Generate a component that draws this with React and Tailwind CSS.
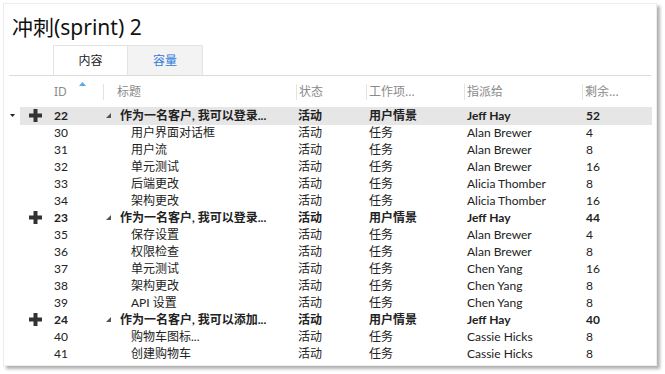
const font = { fontFamily: '"Segoe UI", "Noto Sans", "Noto Sans CJK SC", sans-serif' }
const rowFont = { fontFamily: '"Segoe UI", Lato, "Noto Sans CJK SC", sans-serif' }

const rows = [
  { id: 22, title: "作为一名客户, 我可以登录...", state: "活动", type: "用户情景", who: "Jeff Hay", left: 52, parent: true, selected: true },
  { id: 30, title: "用户界面对话框", state: "活动", type: "任务", who: "Alan Brewer", left: 4 },
  { id: 31, title: "用户流", state: "活动", type: "任务", who: "Alan Brewer", left: 8 },
  { id: 32, title: "单元测试", state: "活动", type: "任务", who: "Alan Brewer", left: 16 },
  { id: 33, title: "后端更改", state: "活动", type: "任务", who: "Alicia Thomber", left: 8 },
  { id: 34, title: "架构更改", state: "活动", type: "任务", who: "Alicia Thomber", left: 16 },
  { id: 23, title: "作为一名客户, 我可以登录...", state: "活动", type: "用户情景", who: "Jeff Hay", left: 44, parent: true },
  { id: 35, title: "保存设置", state: "活动", type: "任务", who: "Alan Brewer", left: 4 },
  { id: 36, title: "权限检查", state: "活动", type: "任务", who: "Alan Brewer", left: 8 },
  { id: 37, title: "单元测试", state: "活动", type: "任务", who: "Chen Yang", left: 16 },
  { id: 38, title: "架构更改", state: "活动", type: "任务", who: "Chen Yang", left: 8 },
  { id: 39, title: "API 设置", state: "活动", type: "任务", who: "Chen Yang", left: 8 },
  { id: 24, title: "作为一名客户, 我可以添加...", state: "活动", type: "用户情景", who: "Jeff Hay", left: 40, parent: true },
  { id: 40, title: "购物车图标...", state: "活动", type: "任务", who: "Cassie Hicks", left: 8 },
  { id: 41, title: "创建购物车", state: "活动", type: "任务", who: "Cassie Hicks", left: 8 },
]

function Plus() {
  return (
    <svg width="13" height="13" viewBox="0 0 13 13">
      <rect x="4.5" y="0" width="4" height="13" fill="#333" />
      <rect x="0" y="4.5" width="13" height="4" fill="#333" />
    </svg>
  )
}

function Sep() {
  return <div className="w-px h-[16px] bg-[#e3e3e3]"></div>
}

export default function App() {
  return (
    <div className="w-[665px] h-[374px] bg-white overflow-hidden text-[#222]" style={font}>
      <div className="ml-[3px] mt-[3px] w-[654px] h-[363px] bg-white border border-[#ececec] shadow-[3px_3px_3px_rgba(0,0,0,0.3)] flex flex-col">
        <div className="pl-[8px] pt-[8px] h-[41px] text-[21px] leading-[30px] text-[#111]">冲刺(sprint) 2</div>

        <div className="ml-[49px] flex h-[30px] text-[12px]">
          <div className="w-[75px] flex items-center justify-center bg-white border border-b-0 border-[#e3e3e3]">内容</div>
          <div className="w-[75px] flex items-center justify-center bg-[#f3f3f3] border border-l-0 border-b-0 border-[#e3e3e3] text-[#2f7ad9]">容量</div>
        </div>
        <div className="mx-[5px] h-px bg-[#dcdcdc]"></div>

        <div className="flex items-center h-[31px] text-[12px] text-[#8a8a8a]">
          <div className="w-[50px]"></div>
          <div className="w-[49px] relative flex items-center">
            ID
            <svg className="absolute left-[25px] top-[-1px]" width="7" height="4" viewBox="0 0 7 4"><path d="M0 4 L3.5 0 L7 4 Z" fill="#5aa7e6" /></svg>
          </div>
          <Sep />
          <div className="w-[192px] pl-[13px]">标题</div>
          <Sep />
          <div className="w-[69px] pl-[2px]">状态</div>
          <Sep />
          <div className="w-[97px] pl-[2px]">工作项...</div>
          <Sep />
          <div className="w-[117px] pl-[2px]">指派给</div>
          <Sep />
          <div className="pl-[2px]">剩余...</div>
        </div>

        <div className="flex flex-col text-[12px] mr-[4px]" style={rowFont}>
          {rows.map((r) => (
            <div key={r.id} className="flex items-center h-[17px]">
              <div className="w-[16px] flex justify-center">
                {r.selected && (
                  <svg width="5" height="3" viewBox="0 0 5 3"><path d="M0 0 L5 0 L2.5 3 Z" fill="#222" /></svg>
                )}
              </div>
              <div className={`flex-1 flex items-center h-[18px] ${r.selected ? "bg-[#e6e6e6]" : ""} ${r.parent ? "font-bold" : ""}`}>
                <div className="w-[30px] flex justify-center">{r.parent && <Plus />}</div>
                <div className="w-[53px] pl-[4px]">{r.id}</div>
                {r.parent ? (
                  <div className="w-[195px] flex items-center">
                    <svg className="mr-[9px] ml-[3px]" width="5" height="5" viewBox="0 0 5 5"><path d="M5 0 L5 5 L0 5 Z" fill="#555" /></svg>
                    <span>{r.title}</span>
                  </div>
                ) : (
                  <div className="w-[195px] pl-[28px]">{r.title}</div>
                )}
                <div className="w-[71px]">{r.state}</div>
                <div className="w-[98px]">{r.type}</div>
                <div className="w-[119px]">{r.who}</div>
                <div>{r.left}</div>
              </div>
            </div>
          ))}
        </div>
      </div>
    </div>
  )
}
